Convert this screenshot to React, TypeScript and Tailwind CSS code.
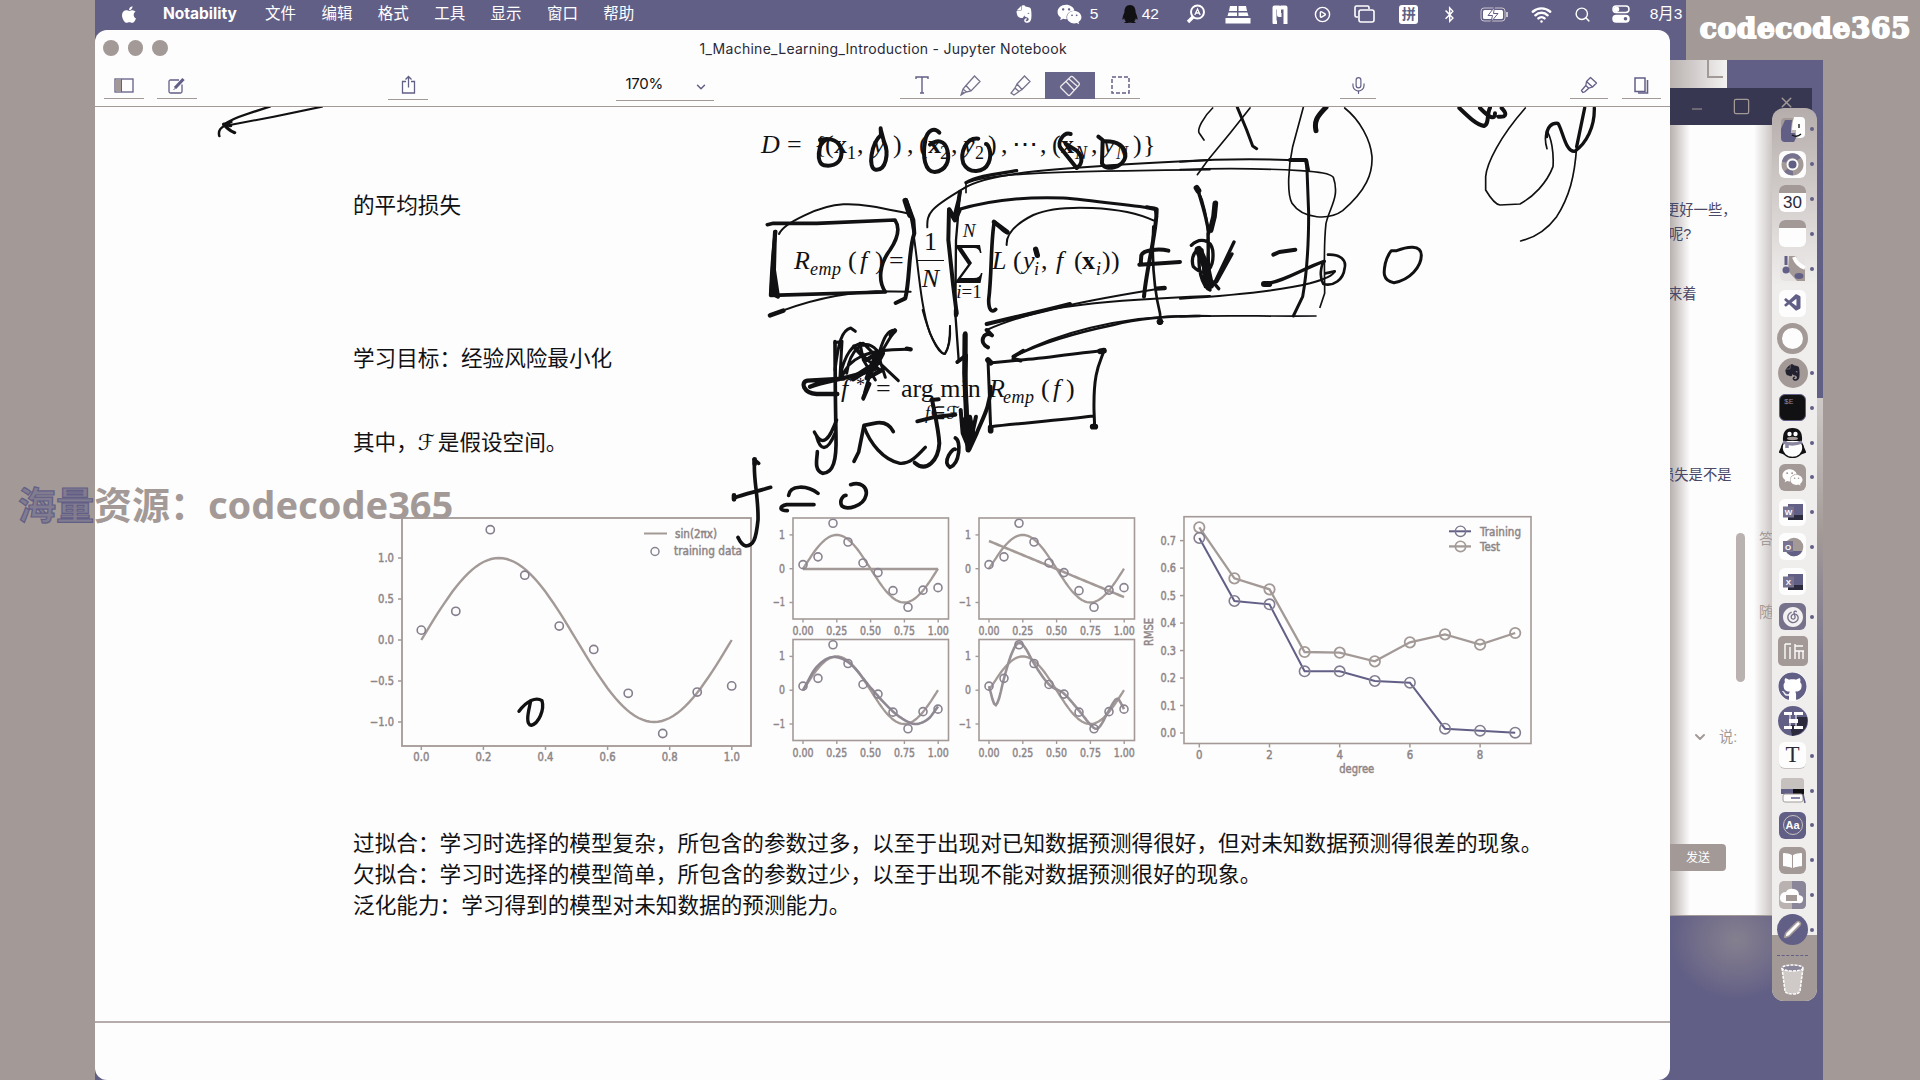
import React from "react";
import { FaApple, FaWeixin, FaQq, FaGithub, FaBookOpen, FaEvernote, FaChrome, FaBluetoothB } from "react-icons/fa";
import { SiNeteasecloudmusic } from "react-icons/si";
import { VscVscode } from "react-icons/vsc";
import { Wifi, Search, CirclePlay, ChevronDown, Minus, Square, X, Mic, Pen } from "lucide-react";

const TAUPE = "#a39a97";
const PURPLE = "#625f86";
const INK = "#111113";

/* ---------- formulas ---------- */

type Tok = [number, string, string?];

const SUB = "text-[18px] relative top-[6px]";
const B = "font-bold";
const I = "italic";

function Formula({ tokens }: { tokens: Tok[] }) {
  return (
    <div className="flex h-10 items-baseline whitespace-pre leading-[40px]">
      {tokens.map(([x, text, cls], i) => {
        const next = tokens[i + 1];
        return (
          <span key={i} className={`shrink-0 ${cls ?? ""}`} style={next ? { width: next[0] - x } : undefined}>
            {text}
          </span>
        );
      })}
    </div>
  );
}

const dataset: Tok[] = [
  [761, "D", I], [787, "="], [814, "{"], [825, "("], [834, "x", B], [847, "1", SUB], [857, ","],
  [873, "y", I], [884, " "], [893, ")"], [907, ","], [919, "("], [928, "x", B], [940, "2", SUB], [951, ","],
  [963, "y", I], [975, "2", SUB], [988, ")"], [1001, ","], [1012, "⋯"], [1040, ","], [1052, "("],
  [1061, "x", B], [1075, "N", SUB + " italic"], [1091, ","], [1103, "y", I], [1116, "N", SUB + " italic"], [1133, ")"], [1143, "}"],
];

const riskLeft: Tok[] = [
  [794, "R", I], [810, "emp", SUB + " italic tracking-[0.5px]"], [848, "("], [860, "f", I], [875, ")"], [889, "="], [917, ""],
];

const riskRight: Tok[] = [
  [992, "L", I], [1013, "("], [1023, "y", I], [1034, "i", SUB + " italic"], [1041, ","], [1056, "f", I], [1074, "("],
  [1082, "x", B], [1096, "i", SUB + " italic"], [1102, ")"], [1111, ")"],
];

const goal: Tok[] = [
  [841, "f", I], [856, "*", "text-[18px] relative top-[-6px]"], [876, "="], [901, "arg min"], [989, "R", I],
  [1003, "emp", SUB + " italic tracking-[0.5px]"], [1041, "("], [1053, "f", I], [1066, ")"],
];

/* ---------- charts ---------- */

const sampleY = [0.12, 0.35, 1.345, 0.79, 0.17, -0.115, -0.65, -1.14, -0.635, -0.56];

function curve(fn: (t: number) => number, x0: number, w: number, y0: number, u: number, n = 80) {
  const pts: string[] = [];
  for (let i = 0; i <= n; i++) {
    const t = i / n;
    pts.push(`${(x0 + t * w).toFixed(1)},${(y0 - fn(t) * u).toFixed(1)}`);
  }
  return pts.join(" ");
}

const sine = (t: number) => Math.sin(2 * Math.PI * t);

function spline(px: number[], py: number[]) {
  const n = px.length;
  const m = px.map((_, i) => {
    if (i === 0) return (py[1] - py[0]) / (px[1] - px[0]);
    if (i === n - 1) return (py[n - 1] - py[n - 2]) / (px[n - 1] - px[n - 2]);
    return (py[i + 1] - py[i - 1]) / (px[i + 1] - px[i - 1]);
  });
  return (t: number) => {
    let i = 0;
    while (i < n - 2 && t > px[i + 1]) i++;
    const h = px[i + 1] - px[i];
    const s = (t - px[i]) / h;
    const s2 = s * s;
    const s3 = s2 * s;
    return (2 * s3 - 3 * s2 + 1) * py[i] + (s3 - 2 * s2 + s) * h * m[i] + (-2 * s3 + 3 * s2) * py[i + 1] + (s3 - s2) * h * m[i + 1];
  };
}

const cubic = spline([0, 0.1, 0.22, 0.35, 0.5, 0.62, 0.72, 0.83, 0.93, 1], [0, 0.68, 0.98, 0.78, 0.08, -0.45, -0.8, -1.0, -0.84, -0.48]);
const ninth = spline(
  [0, 0.04, 0.07, 0.111, 0.16, 0.21, 0.26, 0.333, 0.444, 0.555, 0.666, 0.777, 0.82, 0.888, 0.95, 1],
  [0.12, -0.42, -0.3, 0.35, 1.0, 1.38, 1.3, 0.79, 0.17, -0.1, -0.6, -1.12, -1.08, -0.6, -0.25, -0.56],
);

function Label({ x, y, w, children, anchor = "middle" }: { x: number; y: number; w: number; children: string; anchor?: "start" | "middle" | "end" }) {
  return (
    <text x={x} y={y} textAnchor={anchor} textLength={w} lengthAdjust="spacingAndGlyphs" fontSize="11.5" fill="#8f8688" stroke="#8f8688" strokeWidth="0.5">
      {children}
    </text>
  );
}

function SineChart() {
  return (
    <svg width="400" height="260" viewBox="360 510 400 260" className="shrink-0 font-['DejaVu_Sans',sans-serif]" fill="none" stroke={TAUPE}>
      <rect x="402" y="518" width="349" height="228" strokeWidth="1.8" />
      {[0, 1, 2, 3, 4, 5].map((i) => (
        <path key={i} d={`M${421.3 + i * 62.1} 746v4`} strokeWidth="1.5" />
      ))}
      {[558, 599, 640, 681, 722].map((y) => (
        <path key={y} d={`M398 ${y}h4`} strokeWidth="1.5" />
      ))}
      <g stroke="none">
        {["0.0", "0.2", "0.4", "0.6", "0.8", "1.0"].map((t, i) => (
          <Label key={t} x={421.3 + i * 62.1} y={761} w={16}>{t}</Label>
        ))}
        {["1.0", "0.5", "0.0", "−0.5", "−1.0"].map((t, i) => (
          <Label key={t} x={394} y={562 + i * 41} w={t.length > 3 ? 24 : 16} anchor="end">{t}</Label>
        ))}
        <Label x={675} y={538} w={42} anchor="start">sin(2πx)</Label>
        <Label x={674} y={555} w={68} anchor="start">training data</Label>
      </g>
      <polyline points={curve(sine, 421.3, 310.4, 640, 82)} strokeWidth="2.4" />
      <path d="M644 533.5h23" strokeWidth="2" />
      <circle cx="655" cy="551.5" r="4" stroke="#8a8390" strokeWidth="1.5" />
      {sampleY.map((v, i) => (
        <circle key={i} cx={421.3 + (i * 310.4) / 9} cy={640 - v * 82} r="4.1" stroke="#857e8d" strokeWidth="1.6" />
      ))}
    </svg>
  );
}

const fits: { x: number; y: number; fn: (t: number) => number; color: string }[] = [
  { x: 793, y: 518, fn: () => -0.01, color: TAUPE },
  { x: 979, y: 518, fn: (t) => 0.82 - 1.66 * t, color: TAUPE },
  { x: 793, y: 639.5, fn: cubic, color: "#8f8892" },
  { x: 979, y: 639.5, fn: ninth, color: "#979095" },
];

function FitCharts() {
  return (
    <svg width="372" height="260" viewBox="764 510 372 260" className="ml-1 shrink-0 font-['DejaVu_Sans',sans-serif]" fill="none" stroke={TAUPE}>
      {fits.map((p, k) => {
        const x0 = p.x + 10;
        const y0 = p.y + 50.7;
        return (
          <g key={k}>
            <rect x={p.x} y={p.y} width="155.500" height="101" strokeWidth="1.6" />
            {["0.00", "0.25", "0.50", "0.75", "1.00"].map((t, i) => (
              <g key={t}>
                <path d={`M${x0 + i * 33.8} ${p.y + 101}v3.5`} strokeWidth="1.4" />
                <g stroke="none">
                  <Label x={x0 + i * 33.8} y={p.y + 117} w={21}>{t}</Label>
                </g>
              </g>
            ))}
            {["1", "0", "−1"].map((t, i) => (
              <g key={t}>
                <path d={`M${p.x - 3.5} ${y0 - 33.8 + i * 33.8}h3.5`} strokeWidth="1.4" />
                <g stroke="none">
                  <Label x={p.x - 8} y={y0 - 30 + i * 33.8} w={t.length > 1 ? 12 : 6} anchor="end">{t}</Label>
                </g>
              </g>
            ))}
            <polyline points={curve(sine, x0, 135, y0, 33.8)} strokeWidth="2.3" />
            <polyline points={curve(p.fn, x0, 135, y0, 33.8)} stroke={p.color} strokeWidth="2.6" />
            {sampleY.map((v, i) => (
              <circle key={i} cx={x0 + (i * 135) / 9} cy={y0 - v * 33.8} r="4" stroke="#8a8390" strokeWidth="1.6" />
            ))}
          </g>
        );
      })}
    </svg>
  );
}

const training = [114, 303, 313, 514, 514, 543, 548, 686, 692, 698].map((v) => 500 + v / 3);
const testing = [82, 235, 268, 456, 458, 484, 427, 403, 434, 399].map((v) => 500 + v / 3);
const degreeX = (i: number) => 1199.3 + i * 35.1;

function RmseChart() {
  const line = (ys: number[]) => ys.map((y, i) => `${degreeX(i)},${y}`).join(" ");
  return (
    <svg width="400" height="275" viewBox="1140 510 400 275" className="ml-1 shrink-0 font-['DejaVu_Sans',sans-serif]" fill="none" stroke={TAUPE}>
      <rect x="1184" y="516.7" width="347" height="226.8" strokeWidth="1.6" />
      {[0, 2, 4, 6, 8].map((i) => (
        <g key={i}>
          <path d={`M${degreeX(i)} 743.5v4`} strokeWidth="1.5" />
          <g stroke="none"><Label x={degreeX(i)} y={758.5} w={6.5}>{String(i)}</Label></g>
        </g>
      ))}
      {["0.0", "0.1", "0.2", "0.3", "0.4", "0.5", "0.6", "0.7"].map((t, i) => (
        <g key={t}>
          <path d={`M1180 ${733 - i * 27.48}h4`} strokeWidth="1.5" />
          <g stroke="none"><Label x={1176} y={737 - i * 27.48} w={15.5} anchor="end">{t}</Label></g>
        </g>
      ))}
      <g stroke="none">
        <Label x={1356.7} y={773} w={35}>degree</Label>
        <g transform="rotate(-90 1149 632)"><Label x={1149} y={636} w={28}>RMSE</Label></g>
        <Label x={1480} y={535.5} w={41} anchor="start">Training</Label>
        <Label x={1480} y={550.5} w={20} anchor="start">Test</Label>
      </g>
      <polyline points={line(testing)} strokeWidth="2.3" />
      <polyline points={line(training)} stroke={PURPLE} strokeWidth="2" />
      <path d="M1449 531.3h22" stroke={PURPLE} strokeWidth="2" />
      <path d="M1449 546.4h22" strokeWidth="2.3" />
      <circle cx="1460.5" cy="531.3" r="5.2" stroke="#7c778d" strokeWidth="1.4" />
      <circle cx="1460.5" cy="546.4" r="5.2" strokeWidth="1.6" />
      {testing.map((y, i) => <circle key={i} cx={degreeX(i)} cy={y} r="5.2" strokeWidth="1.8" />)}
      {training.map((y, i) => <circle key={i} cx={degreeX(i)} cy={y} r="5.2" stroke="#837d90" strokeWidth="1.6" />)}
    </svg>
  );
}

/* ---------- handwriting ---------- */

function Handwriting() {
  return (
    <svg
      className="pointer-events-none absolute left-0 top-[77px]"
      width="1575"
      height="700"
      viewBox="95 107 1575 700"
      fill="none"
      stroke={INK}
      strokeLinecap="round"
      strokeLinejoin="round"
    >
      <g transform="translate(90 0) scale(.40816 .33333)">
        <path d="M440 320L385 342Q345 358 328 374L345 378" strokeWidth="7" />
        <path d="M568 320L450 350L330 378Q312 388 317 409" strokeWidth="6" />
        <path d="M328 374L345 366M328 372Q338 390 354 398" strokeWidth="9" />
      </g>
      <g transform="translate(730 100) scale(.33333)">
        <g strokeWidth="12">
          <path d="M290 118C262 130 258 190 282 196C320 202 338 180 334 150C328 122 304 112 270 120" />
          <path d="M452 85L453 105C424 130 412 205 437 209C468 212 478 160 462 125L452 88" />
          <path d="M628 98C612 80 592 92 586 120C576 170 585 216 614 216C650 212 660 180 652 150C644 120 622 118 600 134" />
          <path d="M745 116C706 112 690 160 700 190C716 222 762 220 776 188C788 160 774 130 768 132" />
          <path d="M1022 102C1000 94 980 130 992 144L1040 204C1060 190 1058 168 1040 152L1008 132" />
          <path d="M1105 110L1118 120L1116 190C1124 214 1180 204 1186 170C1188 140 1164 122 1120 124" />
        </g>
        <g strokeWidth="6">
          <path d="M147 402C160 370 270 316 340 313C410 310 480 330 540 342" />
          <path d="M592 382C590 340 600 325 700 266C760 225 900 205 1440 180" />
          <path d="M708 278V250C780 218 980 214 1440 209" strokeWidth="5" />
          <path d="M540 345C562 430 566 610 600 700C620 745 640 765 645 762C660 740 660 700 660 678" />
          <path d="M830 435C828 400 860 370 910 345C990 310 1180 318 1272 362" />
          <path d="M125 645C210 610 320 580 440 574L542 575" />
          <path d="M770 690C880 640 1050 605 1250 572L1300 564" />
          <path d="M800 665C950 620 1120 600 1440 588" />
          <path d="M690 280L678 420L676 640L686 780" strokeWidth="7" />
          <path d="M850 770C960 710 1160 640 1440 648" />
        </g>
        <path d="M112 374L130 370H260L495 360C512 385 500 420 480 450C450 490 442 540 466 576L122 586C125 520 130 440 137 395" strokeWidth="11" />
        <path d="M135 395L130 480L124 580L144 590L132 510Z" strokeWidth="12" fill={INK} />
        <path d="M528 300L550 360L553 400C535 450 540 540 526 595L497 609" strokeWidth="12" />
        <path d="M526 302L540 345" strokeWidth="17" />
        <path d="M708 248C740 228 800 222 860 212" strokeWidth="10" />
        <path d="M690 275L686 300L672 355L657 328L655 420L670 560L680 640" strokeWidth="12" />
        <path d="M658 330L675 360L688 330" strokeWidth="14" />
        <path d="M680 330C780 300 900 290 1000 294C1080 300 1200 318 1275 325L1280 350" strokeWidth="9" />
        <path d="M1250 322L1280 328C1280 400 1250 500 1242 590" strokeWidth="12" />
        <path d="M1270 380C1265 480 1270 560 1290 640L1292 665" strokeWidth="8" />
        <circle cx="1290" cy="665" r="9" fill={INK} strokeWidth="3" />
        <path d="M832 398C820 395 810 380 793 366C782 420 786 520 776 600C776 630 785 640 797 628" strokeWidth="11" />
        <path d="M792 366L832 396" strokeWidth="14" />
        <path d="M120 646L160 632" strokeWidth="14" />
        <path d="M770 672C860 650 920 638 1020 612M770 690L786 706C760 690 745 730 774 742" strokeWidth="12" />
        <path d="M917 448L922 466" strokeWidth="16" />
        <path d="M1315 452C1290 446 1240 448 1234 466M1228 494L1350 486M1234 466L1232 494" strokeWidth="12" />
        <path d="M678 630V645M706 700V780M1280 566L1304 564" strokeWidth="13" />
        <path d="M1402 264C1412 300 1430 350 1436 400" strokeWidth="10" />
      </g>
      <g transform="translate(1180 100) scale(.33333)">
        <path d="M98 24C70 50 50 90 58 100L72 120" strokeWidth="5" />
        <path d="M210 24L150 100L84 180L52 224" strokeWidth="5" />
        <path d="M172 22L200 90L218 138L230 146" strokeWidth="9" />
        <path d="M370 22L338 140C325 200 320 280 336 310C370 360 450 360 488 332C560 270 578 220 576 170C572 120 540 60 494 24" strokeWidth="5" />
        <path d="M438 22C410 50 402 65 408 92" strokeWidth="15" />
        <path d="M0 185C100 178 250 176 376 182" strokeWidth="6" />
        <path d="M330 180L378 180L384 210" strokeWidth="12" />
        <path d="M380 182L386 340C386 420 384 500 368 590L340 648" strokeWidth="9" />
        <path d="M0 209C120 204 260 206 360 212C420 216 450 220 460 232C480 290 450 320 438 370C430 440 434 500 434 580L420 622" strokeWidth="5" />
        <path d="M0 596C160 586 300 572 390 550C440 536 460 526 464 514" strokeWidth="6" />
        <path d="M0 650C120 644 260 650 408 648" strokeWidth="5" />
        <path d="M50 262L66 300C84 360 90 420 82 480" strokeWidth="7" />
        <path d="M50 264L55 272" strokeWidth="18" />
        <path d="M106 310L102 350L92 390" strokeWidth="17" />
        <path d="M34 436C60 410 92 420 98 450C104 500 80 540 40 500C30 470 50 440 66 450L76 560L98 545L116 566M84 400L86 560M60 450C50 500 66 560 90 570M162 426L104 548M156 462L110 545" strokeWidth="10" />
        <path d="M56 450L78 500L90 555" strokeWidth="24" />
        <path d="M280 464L298 456L346 449" strokeWidth="12" />
        <path d="M252 552C310 546 370 505 432 484" strokeWidth="10" />
        <path d="M252 552L268 552" strokeWidth="18" />
        <path d="M444 464C480 462 500 480 494 504C490 540 460 560 430 552C416 530 424 490 434 484M436 520L464 514" strokeWidth="8" />
        <path d="M634 452L650 452C680 440 724 432 724 466C724 500 690 540 642 548C604 542 612 510 616 490C620 474 626 462 634 452Z" strokeWidth="9" />
        <path d="M838 24C870 55 890 74 912 78C928 74 920 40 930 24M900 24C930 55 945 60 945 40M965 24C985 45 975 52 955 50" strokeWidth="12" />
        <path d="M1036 24C960 110 920 190 917 230V270C935 300 950 314 960 315L1020 312C1060 290 1100 250 1119 200C1122 160 1114 110 1100 92C1094 110 1096 130 1101 146" strokeWidth="5" />
        <path d="M1100 110C1100 80 1116 68 1134 70C1148 90 1156 156 1184 154C1220 130 1244 80 1243 24" strokeWidth="10" />
        <path d="M1214 24L1190 140" strokeWidth="10" />
        <path d="M1190 140C1184 230 1168 290 1130 350C1100 390 1060 414 1022 423" strokeWidth="5" />
      </g>
      <g transform="translate(720 310) scale(.33333)">
        <path d="M345 95L346 250L348 380C350 450 340 490 308 490C280 480 292 445 292 425" strokeWidth="11" />
        <path d="M283 366C290 380 296 390 308 392C330 390 340 350 350 330M290 380C300 420 320 430 345 370" strokeWidth="10" />
        <path d="M345 180C355 100 365 60 392 54L406 64M345 98L366 94L360 200C375 130 400 100 430 100L460 130L480 160L535 212M366 200C385 150 430 116 572 118M480 120C490 90 500 60 525 60M525 60C480 130 440 200 430 268M420 100L430 150L466 210M380 190C390 120 430 80 470 120L496 202M430 140L480 180" strokeWidth="9" />
        <path d="M402 110L440 150L470 130L440 205L486 180" strokeWidth="13" />
        <path d="M270 230C320 210 400 205 470 175M352 252H290C250 250 240 216 262 212L370 206" strokeWidth="13" />
        <path d="M400 205L470 160L486 130" strokeWidth="18" />
        <path d="M430 264L448 222M525 62L512 76M560 116L572 118" strokeWidth="13" />
        <path d="M402 454L416 426L432 346L462 340C490 334 510 345 520 365" strokeWidth="11" />
        <path d="M432 350C450 400 490 450 540 460C570 462 590 440 616 412" strokeWidth="10" />
        <path d="M636 268C644 310 656 360 658 400C655 450 620 490 584 458M592 334L648 320L706 314M634 270L656 268" strokeWidth="12" />
        <path d="M706 384C724 392 720 460 690 472C664 456 700 410 706 418" strokeWidth="11" />
        <path d="M735 74L734 190L744 420" strokeWidth="15" />
        <path d="M712 156L738 136L736 240L746 420L768 320M722 300L728 370L748 418L770 370C785 330 812 290 812 230" strokeWidth="12" />
        <path d="M728 330L746 414L760 370L750 320Z" strokeWidth="12" fill={INK} />
        <path d="M608 0C624 60 650 130 674 132C690 110 692 80 690 48" strokeWidth="6" />
        <path d="M804 150L808 250L812 355M816 158L900 150C980 146 1080 126 1152 122C1140 160 1120 180 1122 300L1124 350M812 350C900 340 1020 330 1120 318" strokeWidth="9" />
        <path d="M804 150L812 158M812 352L812 362M1118 350H1126M1140 124L1152 122" strokeWidth="17" />
        <path d="M880 140C960 100 1060 70 1180 45C1260 24 1340 18 1440 18" strokeWidth="7" />
        <path d="M880 140L910 122M880 146L902 152" strokeWidth="11" />
        <path d="M104 450C98 500 116 560 114 630C108 690 100 706 78 708C62 704 58 690 54 682M42 564C70 552 110 545 152 532M102 448L116 460" strokeWidth="11" />
        <path d="M42 556V568M104 448V462" strokeWidth="14" />
        <path d="M206 556C210 525 260 524 294 550M282 584H200C180 588 174 602 202 602" strokeWidth="11" />
        <path d="M392 524C420 514 444 530 438 556C430 590 380 600 366 588C356 572 370 556 378 556" strokeWidth="11" />
      </g>
      <g transform="translate(360 500) scale(.33333)">
        <path d="M477 634C500 602 528 590 546 602C554 630 536 670 514 676C492 672 510 620 512 602" strokeWidth="10" />
      </g>
    </svg>
  );
}

/* ---------- menu bar ---------- */

function MenuBar() {
  return (
    <div className="absolute left-0 top-0 flex h-[30px] w-[1591px] items-center overflow-hidden bg-[#625f86] pb-[2px] text-[15.5px] text-white">
      <FaApple className="ml-[26px] h-[19px] w-4 shrink-0" />
      <span className="ml-[26px] w-[102px] shrink-0 font-['Inter',sans-serif] text-[15.5px] font-bold">Notability</span>
      {["文件", "编辑", "格式", "工具", "显示", "窗口", "帮助"].map((t) => (
        <span key={t} className="w-[56.4px] shrink-0">{t}</span>
      ))}
      <div className="ml-[345px] flex h-full shrink-0 items-center">
        <div className="flex w-[38px] justify-center"><FaEvernote size={20} /></div>
        <div className="flex w-[70px] items-center gap-2 pl-[14px]">
          <FaWeixin size={25} /><span>5</span>
        </div>
        <div className="flex w-[60px] items-center gap-[3px] pl-2">
          <FaQq size={18} color={INK} /><span>42</span>
        </div>
        <div className="flex w-[46px] justify-center">
          <svg width="20" height="20" viewBox="0 0 20 20" fill="none" stroke="white" strokeWidth="2">
            <circle cx="11.5" cy="8" r="6.5" /><path d="M7 13l-5 5" strokeWidth="3.4" /><path d="M8.8 11l2.7-6 2.7 6M9.6 9h3.8" strokeWidth="1.3" />
          </svg>
        </div>
        <div className="flex w-[38px] justify-center">
          <svg width="26" height="19" viewBox="0 0 26 19" fill="white">
            <path d="M5 1h7v5H4zM13.5 1H21l1 5h-8.500zM3.500 7.500H12V11H2.500zM13.500 7.500h9l1 3.500h-10zM0.500 13h25v5.500h-25z" />
          </svg>
        </div>
        <div className="flex w-[46px] justify-center">
          <svg width="16" height="19" viewBox="0 0 16 19" fill="none" stroke="white" strokeWidth="4">
            <path d="M5 17.500H2.500V2.500H7V10H9.500M8.500 2.500H13.500V19" strokeLinejoin="round" />
          </svg>
        </div>
        <div className="flex w-10 justify-center"><CirclePlay size={17} strokeWidth={2} /></div>
        <div className="flex w-11 justify-center">
          <svg width="21" height="18" viewBox="0 0 21 18" fill="none" stroke="white" strokeWidth="1.600">
            <path d="M4 12H2.500Q1 12 1 10.500V2.500Q1 1 2.500 1h11Q15 1 15 2.500V4" /><rect x="5" y="5" width="15" height="12" rx="2" />
          </svg>
        </div>
        <div className="flex w-11 justify-center">
          <span className="flex size-[19px] items-center justify-center rounded-[3px] bg-white text-sm font-bold leading-none text-[#625f86]">拼</span>
        </div>
        <div className="flex w-[38px] justify-center"><FaBluetoothB size={17} /></div>
        <div className="flex w-[52px] justify-center">
          <svg width="29" height="15" viewBox="0 0 29 15" fill="none">
            <rect x="1" y="1" width="24" height="13" rx="3" stroke="#c9c3cc" /><rect x="3" y="3" width="20" height="9" rx="1.500" fill="white" />
            <path d="M27 5v5" stroke="#c9c3cc" strokeWidth="2" /><path d="M14.500 0L8 8.500h4.500L11 15l7-8.500h-4.500z" fill="white" stroke={PURPLE} />
          </svg>
        </div>
        <div className="flex w-[42px] justify-center"><Wifi size={21} strokeWidth={2.800} /></div>
        <div className="flex w-[39px] justify-center"><Search size={17} strokeWidth={2} /></div>
        <div className="flex w-[38px] justify-center">
          <svg width="18" height="18" viewBox="0 0 18 18" fill="none" stroke="white" strokeWidth="1.500">
            <rect x="1" y="1" width="16" height="6.500" rx="3.200" /><circle cx="4.500" cy="4.200" r="2" fill="white" />
            <rect x="1" y="10.500" width="16" height="6.500" rx="3.200" fill="white" /><circle cx="13.500" cy="13.700" r="1.800" fill={PURPLE} stroke="none" />
          </svg>
        </div>
        <span className="ml-[10px] whitespace-nowrap">8月3</span>
      </div>
    </div>
  );
}

/* ---------- note window ---------- */

const TOOL = "flex h-[27px] items-center justify-center border-b border-[#a39a97] text-[#625f86]";

function Toolbar() {
  return (
    <div className="flex h-[41px] items-start border-b border-[#a39a97] pt-[6px]">
      <div className={`${TOOL} ml-[9px] w-10`}>
        <svg width="20" height="15" viewBox="0 0 20 15" fill="none" stroke="currentColor"><rect x="1" y="1" width="18" height="13" strokeWidth="1.300" /><rect x="1.500" y="1.500" width="5.500" height="12" fill={TAUPE} stroke="none" /><path d="M7.500 1v13" /></svg>
      </div>
      <div className={`${TOOL} ml-[13px] w-10`}>
        <svg width="18" height="17" viewBox="0 0 18 17" fill="none" stroke="currentColor"><path d="M11 3H2.500Q1 3 1 4.500v10Q1 16 2.500 16h10Q14 16 14 14.500V7.500" strokeWidth="1.300" /><path d="M7 11L15.500 2" strokeWidth="3.200" /><path d="M5.500 12.500l2-1" /></svg>
      </div>
      <div className={`${TOOL} ml-[191px] mt-px w-10`}>
        <svg width="15" height="19" viewBox="0 0 15 19" fill="none" stroke="currentColor" strokeWidth="1.300" className="-mt-[3px]"><path d="M5 6.500H1.500V18h12V6.500H10M7.500 12.500V1.500M4.500 4.500l3-3 3 3" /></svg>
      </div>
      <div className={`${TOOL} ml-[188px] mt-[2px] w-[98px] pb-[5px]`}>
        <span className="ml-[3px] w-[42px] font-['Inter',sans-serif] text-[15px] tracking-[-0.3px] text-[#111113]">170%</span>
        <ChevronDown size={14} strokeWidth={2.500} className="ml-[26px] mt-1 shrink-0" />
      </div>
      <div className="ml-[186px] flex h-[27px] border-b border-[#a39a97] text-[#625f86]">
        <div className="flex w-[44px] items-center justify-center">
          <svg width="14" height="18" viewBox="0 0 14 18" fill="none" stroke="currentColor" strokeWidth="1.400"><path d="M1 3V1h12v2M7 1v16M5 17h4" /></svg>
        </div>
        <div className="flex w-[52px] items-center justify-center">
          <svg width="21" height="21" viewBox="0 0 21 21" fill="none" stroke="#77728c" strokeWidth="1.300"><path d="M6 10.500L14.500 1 20 6.500 11 16 6 17 1 20 3 14zM6 10.500l5 5.500M3 14l3.500 3M1 20l3-3" /></svg>
        </div>
        <div className="flex w-[49px] items-center justify-center">
          <svg width="21" height="21" viewBox="0 0 21 21" fill="none" stroke="#77728c" strokeWidth="1.300"><path d="M7 9L14.500 1 20 6.500 12 14.500zM7 9l-2 4 4 3.500 3-2M5 13l-4 5 3 2 5-3.500" /></svg>
        </div>
        <div className="flex h-[27px] w-[50px] items-center justify-center bg-[#68658a]">
          <svg width="23" height="22" viewBox="0 0 23 22" fill="none" stroke="#ece8ea" strokeWidth="1.300"><path d="M2 11L12 1.500Q13 1 14 2l6 6Q21 9 20 10L11 20Q10 21 9 20l-7-7Q1 12 2 11zM7 6.500l8 8.500M10 4l8 7" /></svg>
        </div>
        <div className="flex w-[45px] items-center pl-4">
          <svg width="19" height="18" viewBox="0 0 19 18" fill="none" stroke="currentColor" strokeWidth="1.500"><rect x="1" y="1" width="17" height="16" strokeDasharray="4 2" /></svg>
        </div>
      </div>
      <div className={`${TOOL} ml-[200px] w-9`}><Mic size={19} strokeWidth={1.500} /></div>
      <div className={`${TOOL} ml-[194px] w-[38px]`}>
        <svg width="18" height="18" viewBox="0 0 18 18" fill="none" stroke="currentColor" strokeWidth="1.300"><path d="M10.500 1.500L16.500 7 12.500 11 6.500 5.500zM6.500 5.500L5.800 9.500 8.800 12.200 12.500 11M5.800 9.500L1.500 14.500 3 16.500 4.500 16 8.800 12.200" strokeLinejoin="round" /></svg>
      </div>
      <div className={`${TOOL} ml-[14px] w-[39px]`}>
        <svg width="15" height="17" viewBox="0 0 15 17" fill="none" stroke="currentColor"><rect x="1" y="1" width="10" height="13.500" strokeWidth="1.500" /><path d="M13.500 3v13H4" strokeWidth="1.600" /></svg>
      </div>
    </div>
  );
}

function NoteWindow() {
  return (
    <div className="absolute left-0 top-[30px] flex h-[1050px] w-[1575px] flex-col overflow-hidden rounded-xl bg-[#fdfdfd] text-[#111113]">
      <div className="flex h-9 items-center">
        <div className="ml-2 flex gap-[9px]">
          <i className="size-[15.500px] rounded-full bg-[#a39a97]" />
          <i className="size-[15.500px] rounded-full bg-[#a39a97]" />
          <i className="size-[15.500px] rounded-full bg-[#a39a97]" />
        </div>
        <span className="ml-[532px] whitespace-nowrap font-['Inter',sans-serif] text-[14px] tracking-[0.27px] text-[#2a2937]">1_Machine_Learning_Introduction - Jupyter Notebook</span>
      </div>
      <Toolbar />
      <div className="relative flex h-[914px] flex-col text-[21.6px] leading-[31px]">
        <div className="ml-[666px] mt-[18px] font-['Liberation_Serif',serif] text-[26px]"><Formula tokens={dataset} /></div>
        <div className="ml-[258px] mt-[25px]">的平均损失</div>
        <div className="ml-[699px] mt-[9px] flex h-[90px] font-['Liberation_Serif',serif] text-[26px]">
          <div className="mt-[11px] w-[123px]"><Formula tokens={riskLeft} /></div>
          <div className="flex w-[27px] flex-col items-center leading-[31px]">
            <span className="h-[31px] w-full border-b-[1.500px] border-[#111113] text-center leading-[24px]">1</span>
            <span className="mt-[2px] italic">N</span>
          </div>
          <div className="ml-[11px] flex w-7 flex-col items-center leading-none">
            <span className="mt-[-9px] h-[19px] text-[19px] italic">N</span>
            <svg width="28" height="40" viewBox="0 0 28 40" className="mt-[4px] shrink-0" fill={INK}>
              <path d="M1 1H25L26.500 9H25Q24 4 19 4H7L17 19 6 34H19Q25 34 26 29H27.500L25.500 39H1V37L13 20.500 1 3Z" />
            </svg>
            <span className="-mt-[2px] text-[19px]"><i>i</i>=1</span>
          </div>
          <div className="ml-[9px] mt-[11px]"><Formula tokens={riskRight} /></div>
        </div>
        <div className="ml-[258px] mt-[23px]">学习目标：经验风险最小化</div>
        <div className="ml-[746px] mt-[-5px] font-['Liberation_Serif',serif] text-[26px]">
          <Formula tokens={goal} />
          <div className="-mt-[6px] ml-[84px] h-5 text-[18px] leading-5"><i>f</i>∈<span className="font-['DejaVu_Sans',sans-serif]">ℱ</span></div>
        </div>
        <div className="ml-[258px] mt-[4px]">其中，<span className="mr-[1px] inline-block w-[19px] font-['DejaVu_Sans',sans-serif] leading-none italic">ℱ</span>是假设空间。</div>
        <div className="ml-[265px] mt-[52px] flex h-[275px] items-start">
          <SineChart />
          <FitCharts />
          <RmseChart />
        </div>
        <div className="ml-[258px] mt-[43px] whitespace-nowrap text-[21.640px]">
          <p>过拟合：学习时选择的模型复杂，所包含的参数过多，以至于出现对已知数据预测得很好，但对未知数据预测得很差的现象。</p>
          <p>欠拟合：学习时选择的模型简单，所包含的参数过少，以至于出现不能对数据预测很好的现象。</p>
          <p>泛化能力：学习得到的模型对未知数据的预测能力。</p>
        </div>
      </div>
      <div className="border-t-2 border-[#b5adab]" />
      <Handwriting />
    </div>
  );
}

/* ---------- chat window behind ---------- */

function ChatWindow() {
  return (
    <div className="absolute left-[1575px] top-[60px] w-[142px]">
      <div className="flex h-[28px] w-[57px] justify-end bg-gradient-to-r from-[#b9b2b0] to-[#f4f2f2] pr-1">
        <div className="h-[18px] w-4 border-b-2 border-l-2 border-[#a39a97]" />
      </div>
      <div className="flex h-[37px] items-center bg-[#383751] text-[#a39a97]">
        <Minus size={16} strokeWidth={1.500} className="ml-[19px] mt-1" />
        <Square size={19} strokeWidth={1.600} className="ml-[27px]" />
        <X size={17} strokeWidth={2} className="ml-[27px] mb-2" />
      </div>
      <div className="relative h-[791px] overflow-hidden border-b border-[#a39a97] bg-[#fdfdfd] text-[14.300px] leading-6 text-[#4a4866]">
        <div className="absolute inset-y-0 left-0 w-5 bg-gradient-to-r from-[#b7b0ae] to-[#fdfdfd]" />
        <div className="absolute inset-y-0 right-[38px] w-5 bg-gradient-to-l from-[#c6c0be] to-[#fdfdfd]" />
        <div className="relative whitespace-nowrap">
          <p className="-ml-[5px] mt-[73px]">更好一些，</p>
          <p className="-ml-px">呢?</p>
          <p className="-ml-[2px] mt-[36px]">来着</p>
          <p className="-ml-[10px] mt-[157px]">损失是不是</p>
          <p className="mt-[238px] flex items-center pl-[22px] text-[#a39a97]">
            <ChevronDown size={16} strokeWidth={3} /><span className="ml-[11px]">说:</span>
          </p>
          <div className="mt-[95px] flex h-[27px] w-14 items-center justify-center rounded-r-sm bg-[#a39a97] text-xs text-white">发送</div>
        </div>
        <div className="absolute left-[66px] top-[408px] h-[149px] w-[9px] rounded-full bg-[#b9b2b0]" />
        <span className="absolute left-[89px] top-[402px] text-[#a39a97]">答</span>
        <span className="absolute left-[89px] top-[475px] text-[#a39a97]">随</span>
      </div>
    </div>
  );
}

/* ---------- dock ---------- */

const TILE = "flex size-[27px] items-center justify-center overflow-hidden rounded-md";

function OfficeIcon({ letter }: { letter: string }) {
  return (
    <div className={`${TILE} bg-[#fdfdfd]`}>
      <svg width="22" height="18" viewBox="0 0 22 18" className="font-['Liberation_Sans',sans-serif]">
        <rect x="6" y="1" width="15" height="16" fill={PURPLE} /><rect x="6" y="12" width="15" height="5" fill="#2c2b3d" />
        <rect x="1" y="3.500" width="11" height="11" fill="#77728f" />
        <text x="6.500" y="12" fontSize="8" fontWeight="bold" fill="white" textAnchor="middle">{letter}</text>
      </svg>
    </div>
  );
}

const dockItems: { node: React.ReactNode; dot?: boolean }[] = [
  { dot: true, node: (
    <svg width="27" height="27" viewBox="0 0 27 27"><path d="M2 6Q2 2 6 2h9q-3 7-3 11v2H2z" fill={TAUPE} /><path d="M6 4h7l-1 9v4h4l1 5-2 4H6q-4 0-4-4V13z" fill={PURPLE} /><path d="M15 1h7q4 0 4 4v13q0 4-5 4-4 0-4-2v-6h-4q0-7 2-13z" fill="#fdfdfd" /><path d="M20 8v4M13 19q5 3 9-1" stroke={INK} strokeWidth="1.300" fill="none" /></svg>
  ) },
  { dot: true, node: <div className={`${TILE} bg-[#fdfdfd]`}><svg width="23" height="23" viewBox="0 0 23 23" fill="none"><circle cx="11.500" cy="11.500" r="8.500" stroke={TAUPE} strokeWidth="5" /><path d="M3 9A8.500 8.500 0 0 1 18 6M5 17A8.500 8.500 0 0 0 12 20" stroke="#77728f" strokeWidth="4.500" /><circle cx="11.500" cy="11.500" r="4" fill={PURPLE} /></svg></div> },
  { dot: true, node: <div className={`${TILE} flex-col bg-[#fdfdfd]`}><i className="h-[8px] w-full shrink-0 bg-[#a39a97]" /><span className="font-['Liberation_Sans',sans-serif] text-[17px] leading-[19px] text-[#2a2937]">30</span></div> },
  { dot: true, node: <div className={`${TILE} items-start bg-[#fdfdfd]`}><i className="h-[8px] w-full bg-[#a39a97]" /></div> },
  { dot: true, node: (
    <svg width="27" height="27" viewBox="0 0 27 27"><rect x="1" y="1" width="25" height="25" rx="5" fill="#e5e2e1" /><path d="M10 1h7q2 8 9 12v13h-8L9 16z" fill={TAUPE} /><path d="M7 1v9" stroke={PURPLE} strokeWidth="3" /><circle cx="7" cy="15" r="3.500" fill={PURPLE} /><ellipse cx="20" cy="21" rx="4.500" ry="3" fill={PURPLE} /><path d="M15 2q3 8 11 11" stroke="#fdfdfd" strokeWidth="4" fill="none" /></svg>
  ) },
  { node: <div className={`${TILE} bg-[#fdfdfd]`}><VscVscode size={20} color={PURPLE} /></div> },
  { node: <div className="size-[31px] rounded-full border-[5px] border-[#a39a97] bg-[#fdfdfd]" /> },
  { dot: true, node: <div className="flex size-[30px] items-center justify-center rounded-full bg-[#a39a97]"><FaEvernote size={19} color="#222130" /></div> },
  { dot: true, node: <div className={`${TILE} items-start justify-start border border-[#625f86] bg-[#111113] pl-1 pt-[3px] font-['Liberation_Mono',monospace] text-[8px] leading-none text-[#8a86aa]`}>$E</div> },
  { dot: true, node: (
    <svg width="27" height="31" viewBox="0 0 27 31"><path d="M4 18L1 25l3 1zM23 18l3 7-3 1z" fill={INK} stroke={INK} strokeWidth="2" /><ellipse cx="13.500" cy="21" rx="10.500" ry="9.500" fill="#fdfdfd" stroke={INK} strokeWidth="1.500" /><path d="M4 14Q3 1 13.500 1T23 14z" fill={INK} /><circle cx="10.500" cy="7" r="2.200" fill="#fdfdfd" /><circle cx="16.500" cy="7" r="2.200" fill="#fdfdfd" /><ellipse cx="13.500" cy="11.500" rx="5.500" ry="1.700" fill={TAUPE} /><path d="M4 15q9 4 19 0M8 16v5" stroke="#8b86a0" strokeWidth="3.500" fill="none" /></svg>
  ) },
  { dot: true, node: <div className={`${TILE} bg-[#a39a97]`}><FaWeixin size={21} color="#fdfdfd" /></div> },
  { dot: true, node: <OfficeIcon letter="W" /> },
  { dot: true, node: (
    <div className={`${TILE} bg-[#fdfdfd]`}><svg width="22" height="20" viewBox="0 0 22 20" className="font-['Liberation_Sans',sans-serif]"><circle cx="12" cy="10" r="9.300" fill={TAUPE} /><path d="M12 19.300A9.300 9.300 0 0 1 4 14h16q-2 5-8 5.300z" fill={PURPLE} /><rect x="1" y="4" width="10" height="11" fill="#77728f" /><text x="6" y="12.500" fontSize="8" fontWeight="bold" fill="white" textAnchor="middle">O</text></svg></div>
  ) },
  { node: <OfficeIcon letter="X" /> },
  { dot: true, node: <div className={`${TILE} bg-[#77728b]`}><SiNeteasecloudmusic size={20} color="#f2f0f0" /></div> },
  { node: (
    <svg width="30" height="30" viewBox="0 0 30 30"><rect width="30" height="30" rx="5" fill={TAUPE} /><path d="M7 8v15M7 8h6M12 11v12M17 8v15M17 10h8M17 15h9M21 15v8M25 15v8" stroke="#fdfdfd" strokeWidth="1.400" fill="none" /></svg>
  ) },
  { node: <FaGithub size={29} color={PURPLE} className="rounded-full bg-white" /> },
  { node: (
    <svg width="30" height="30" viewBox="0 0 30 30"><circle cx="15" cy="15" r="15" fill={PURPLE} /><path d="M21 28Q31 22 29 11H19v8h-7l2 11z" fill="#2c2b3d" /><path d="M6 6h8v3H6zM16 6h9v3h-9zM11 13h9v4h-9zM6 20h8v3H6zM16 20h9v3h-9z" fill="#fdfdfd" /><path d="M12 9v4M18 9v4M12 17v3M18 17v3" stroke="#fdfdfd" /></svg>
  ) },
  { dot: true, node: <div className={`${TILE} border-b border-[#c6c0be] bg-[#fdfdfd] font-['Liberation_Serif',serif] text-[23px] text-[#2a2937]`}>T</div> },
  { dot: true, node: (
    <svg width="27" height="27" viewBox="0 0 27 27"><rect x="2" y="1" width="23" height="13" rx="3" fill="#c6c0be" /><rect x="2" y="12" width="23" height="5" fill={PURPLE} /><path d="M14 12h11v6H14z" fill={INK} /><rect x="4" y="17" width="20" height="8" rx="2" fill="#fdfdfd" stroke={TAUPE} /><path d="M12 21h9M24 17l2 9" stroke={PURPLE} strokeWidth="1.500" /></svg>
  ) },
  { dot: true, node: <div className={`${TILE} bg-[#625f86]`}><span className="flex size-5 items-center justify-center rounded-full border border-[#c6c0be] font-['Liberation_Sans',sans-serif] text-[11px] font-bold text-white">Aa</span></div> },
  { dot: true, node: <div className={`${TILE} bg-[#a39a97]`}><FaBookOpen size={19} color="#fdfdfd" /></div> },
  { dot: true, node: (
    <svg width="29" height="30" viewBox="0 0 29 30"><rect x="1" y="1" width="27" height="28" rx="5" fill="#b9b2b0" /><path d="M14 1h9q5 0 5 5v18q0 5-5 5h-9z" fill="#8a8598" /><path d="M7 23Q1 22 2 17t6-5q2-4 8-3 5 1 5 6 5 1 4 5t-5 3z" fill="#fdfdfd" /><rect x="8" y="15" width="11" height="6" fill={TAUPE} /></svg>
  ) },
  { dot: true, node: <div className="flex size-[31px] items-center justify-center rounded-full bg-[#625f86]"><Pen size={19} color="#a39a97" fill="#fdfdfd" strokeWidth={2} /></div> },
];

function Dock() {
  return (
    <div className="absolute left-[1677px] top-[108px] flex h-[893px] w-[45px] flex-col rounded-xl bg-gradient-to-b from-[#b5adab] via-[#f0eeed] via-20% to-[#f0eeed] to-80% pt-[4px]">
      {dockItems.map((it, i) => (
        <div key={i} className="relative z-10 flex h-[34.800px] w-[41px] shrink-0 items-center justify-center">
          {it.node}
          {it.dot && <i className="absolute -right-px size-[4px] rounded-full bg-[#625f86]" />}
        </div>
      ))}
      <div className="-mt-[12px] flex flex-1 flex-col items-center rounded-b-xl bg-[#a39a97] pr-1">
        <div className="mt-[20px] w-[31px] border-t border-dashed border-[#625f86]" />
        <svg width="23" height="31" viewBox="0 0 23 31" className="mt-[8px]" fill="#cfcac8" stroke="#fdfdfd" strokeWidth="1.500">
          <path d="M1 4L4 27Q5 30 11.500 30T19 27L22 4" strokeDasharray="3 1" /><ellipse cx="11.500" cy="4" rx="10.500" ry="3" fill="#8a8598" strokeDasharray="3 1" />
        </svg>
      </div>
    </div>
  );
}

export default function App() {
  return (
    <div className="relative flex h-[1080px] w-[1920px] overflow-hidden bg-[#a39a97] font-['Liberation_Sans','Noto_Sans_CJK_SC',sans-serif]">
      <div className="relative ml-[95px] h-full w-[1728px] bg-[#625f86]">
        <div className="absolute right-0 top-[398px] h-[340px] w-[6px] bg-gradient-to-b from-[#cfcac8] via-[#a39a97] via-40% to-[#625f86]" />
        <div className="absolute left-[1575px] top-[900px] h-[100px] w-[110px] bg-[radial-gradient(ellipse_at_60%_40%,#85808f_0%,#75708a_35%,#625f86_70%)]" />
        <MenuBar />
        <ChatWindow />
        <Dock />
        <NoteWindow />
      </div>
      <div className="absolute right-0 top-0 flex h-[60px] w-[234px] items-start justify-center bg-[#a39a97] pl-[5px] pt-[12px]">
        <span className="font-['DejaVu_Serif',serif] text-[28px] font-bold leading-[34px] tracking-[0.600px] text-white [-webkit-text-stroke:1.800px_white]">codecode365</span>
      </div>
      <div className="absolute left-[18px] top-[478px] whitespace-nowrap font-['Noto_Sans','Noto_Sans_CJK_SC',sans-serif] text-[38px] font-bold leading-[52px] text-[#a39a97]">
        <span className="text-[#827c90] [-webkit-text-stroke:1.200px_#625f86]">海量</span>资源：codecode365
      </div>
    </div>
  );
}
